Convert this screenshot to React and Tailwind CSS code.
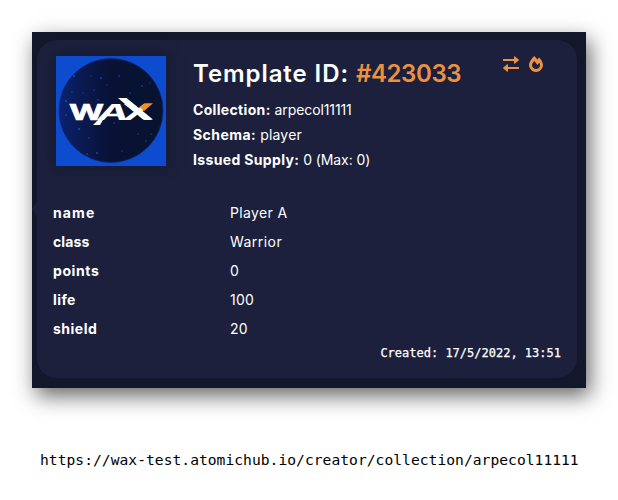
import { FaFireAlt } from "react-icons/fa";

const attributes = [
  { label: "name", value: "Player A", labelClass: "tracking-[1.1px]", valueClass: "tracking-[0.35px]" },
  { label: "class", value: "Warrior", labelClass: "tracking-[0.1px]", valueClass: "tracking-[0.45px]" },
  { label: "points", value: "0", labelClass: "tracking-[0.6px]", valueClass: "tracking-normal" },
  { label: "life", value: "100", labelClass: "tracking-[0.4px]", valueClass: "tracking-[0.2px]" },
  { label: "shield", value: "20", labelClass: "tracking-[0.5px]", valueClass: "tracking-[0.2px]" },
];

const stars = [
  [18, 20, 0.9], [45, 22, 0.8], [35, 20, 0.4], [63, 20, 0.6], [38, 34, 0.5],
  [16, 36, 0.5], [10, 45, 0.9], [10, 59, 0.7], [23, 73, 1], [31, 98, 0.7],
  [33, 82, 0.5], [41, 97, 0.8], [58, 67, 0.5], [82, 78, 0.5], [95, 78, 0.4],
  [90, 85, 0.5], [86, 30, 0.6], [94, 27, 0.3], [74, 37, 0.5], [42, 44, 0.6],
  [27, 37, 0.3], [66, 95, 0.4], [51, 29, 0.3],
];

function WaxLogo() {
  return (
    <svg viewBox="0 0 110 110" className="block size-[110px] shadow-[0_0_14px_rgba(10,15,35,0.5)]">
      <defs>
        <linearGradient id="night">
          <stop offset="0" stopColor="#0a2272" />
          <stop offset="0.22" stopColor="#0a1950" />
          <stop offset="0.5" stopColor="#081235" />
          <stop offset="1" stopColor="#09122f" />
        </linearGradient>
      </defs>
      <rect width="110" height="110" fill="#0d4ccf" />
      <circle cx="55" cy="54.5" r="52" fill="url(#night)" stroke="#0a2878" strokeWidth="0.7" />
      {stars.map(([x, y, o]) => (
        <circle key={`${x}-${y}`} cx={x} cy={y} r="1" fill="#1262e4" opacity={o * 0.8} />
      ))}
      <g fill="#fff" fontFamily="Inter, sans-serif" fontWeight="700" fontSize="22">
        <text x="13" y="63.5" textLength="35" lengthAdjust="spacingAndGlyphs" stroke="#fff" strokeWidth="0.6">W</text>
        <text transform="translate(40 63.5) skewX(-16)" textLength="31" lengthAdjust="spacingAndGlyphs">A</text>
        <text x="66" y="63.5" textLength="31" lengthAdjust="spacingAndGlyphs">X</text>
      </g>
      <path d="M62 42h8.500l26.500 21.500h-10z" fill="#fff" />
      <path d="M50 59l-6 10h-7l10-10z" fill="#fff" />
      <path d="M97 47.300h-8.500l-5 3.700 4.500 4z" fill="#f5921e" />
    </svg>
  );
}

function ExchangeIcon() {
  return (
    <svg viewBox="0 0 16 16" className="size-4" fill="currentColor">
      <path d="M0.400 2.900H11V0.700Q11 0 11.600 0.300L15.700 3.500Q16.200 4 15.700 4.500L11.600 7.700Q11 8 11 7.300V5.100H0.400Q0 5.100 0 4.700V3.300Q0 2.900 0.400 2.900Z" />
      <path d="M15.600 10.900H5V8.700Q5 8 4.400 8.300L0.300 11.500Q-0.200 12 0.300 12.500L4.400 15.700Q5 16 5 15.300V13.100H15.600Q16 13.100 16 12.700V11.300Q16 10.900 15.600 10.900Z" />
    </svg>
  );
}

export default function App() {
  return (
    <div className="flex h-[500px] w-[618px] flex-col bg-white pt-8 pl-8">
      <div className="relative h-[356px] w-[554px] bg-[#12172b] pt-2 pl-[5px] shadow-[4px_8px_20px_0px_rgba(0,0,0,0.6)]">
        <span className="absolute top-[170px] left-0 h-0 w-0 border-y-[7px] border-r-[5px] border-y-transparent border-r-[#1c203c]" />
        <main className="flex h-[338px] w-[540px] flex-col rounded-[20px] bg-[#1c203c] px-4 pt-4 font-['Inter',sans-serif] text-[14px] text-white">
          <header className="flex pl-[3px]">
            <WaxLogo />
            <div className="ml-[27px] w-[310px] whitespace-nowrap">
              <h1 className="h-[41px] text-[24px] leading-[36px] font-semibold tracking-[0.92px]">
                Template ID: <span className="tracking-[-0.4px] text-[#eb9140]">#423033</span>
              </h1>
              <p className="h-[25px] leading-[25px]"><b className="tracking-[0.33px]">Collection:</b> <span className="tracking-[-0.1px]">arpecol11111</span></p>
              <p className="h-[25px] leading-[25px]"><b className="tracking-[0.45px]">Schema:</b> <span className="tracking-[0.2px]">player</span></p>
              <p className="h-[25px] leading-[25px]"><b className="tracking-[0.35px]">Issued Supply:</b> <span className="tracking-[-0.1px]">0 (Max: 0)</span></p>
            </div>
            <div className="flex gap-[9px] text-[#eb9140]">
              <ExchangeIcon />
              <FaFireAlt size={16} />
            </div>
          </header>
          <dl className="mt-[26px]">
            {attributes.map((a) => (
              <div key={a.label} className="flex h-[29px] leading-[29px]">
                <dt className={`w-[177px] font-bold ${a.labelClass}`}>{a.label}</dt>
                <dd className={a.valueClass}>{a.value}</dd>
              </div>
            ))}
          </dl>
          <p className="self-end font-['DejaVu_Sans_Mono',monospace] text-[12px] leading-[20px] [-webkit-text-stroke:0.25px_white]">Created: 17/5/2022, 13:51</p>
        </main>
      </div>
      <p className="mt-[62px] ml-2 font-['DejaVu_Sans_Mono',monospace] text-[14.6px] leading-5 tracking-[0.045px] whitespace-nowrap text-black">
        https://wax-test.atomichub.io/creator/collection/arpecol11111
      </p>
    </div>
  );
}
